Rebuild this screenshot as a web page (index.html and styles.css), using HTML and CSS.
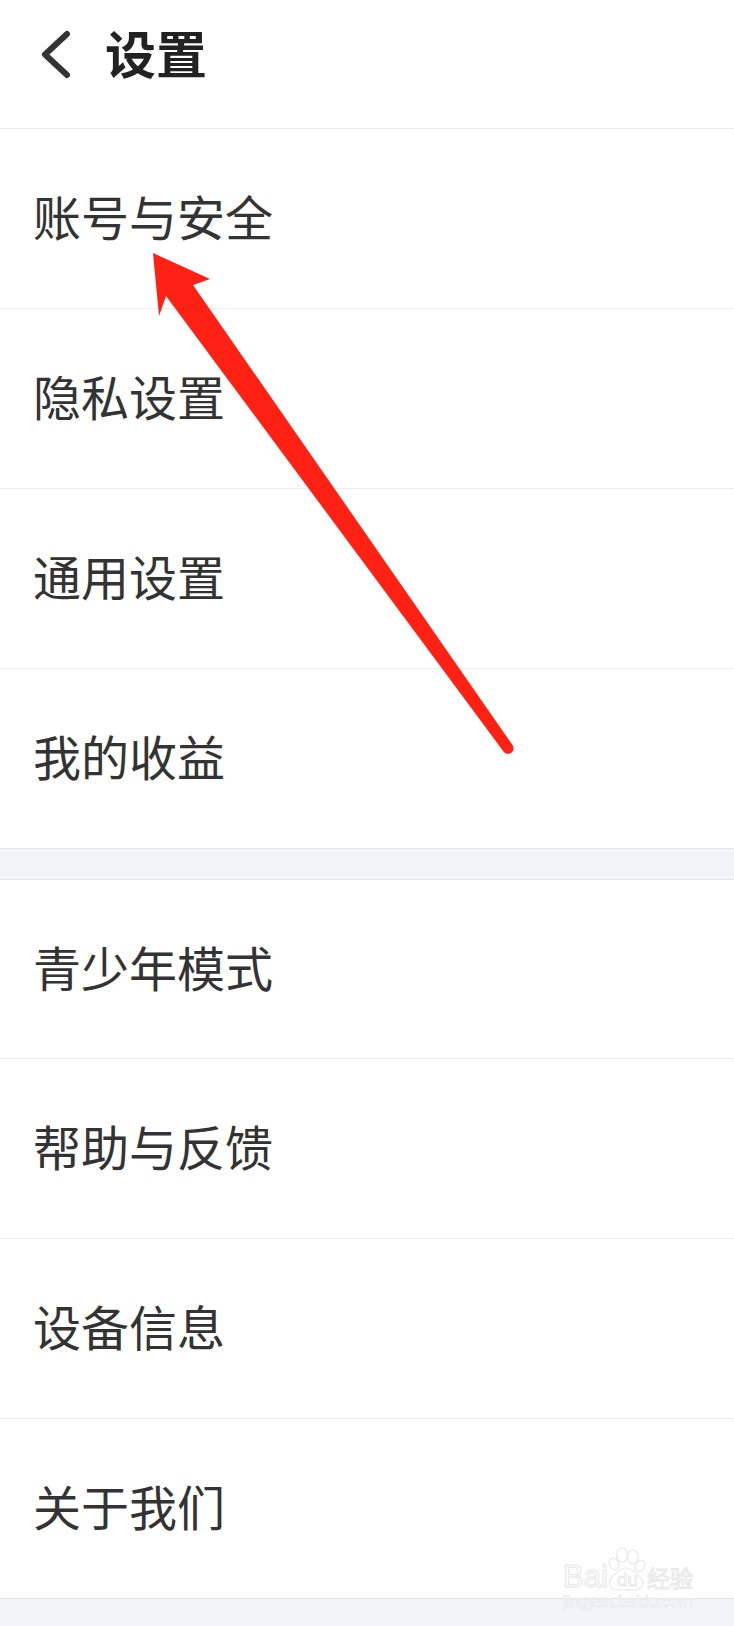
FILE: index.html
```html
<!DOCTYPE html>
<html lang="zh-CN">
<head>
    <meta charset="UTF-8">
    <meta name="viewport" content="width=device-width, initial-scale=1.0">
    <title>设置</title>
    <link rel="stylesheet" href="styles.css">
</head>
<body>
    <!-- Header -->
    <div class="header">
        <svg class="back-icon" width="32" height="50" viewBox="0 0 32 50">
            <path d="M27 4 L5 24.500 L27 45" fill="none" stroke="#333" stroke-width="6" stroke-linecap="round" stroke-linejoin="round"/>
        </svg>
        <h1>设置</h1>
    </div>

    <!-- First group -->
    <div class="group">
        <div class="row">账号与安全</div>
        <div class="row">隐私设置</div>
        <div class="row">通用设置</div>
        <div class="row">我的收益</div>
    </div>

    <div class="spacer"></div>

    <!-- Second group -->
    <div class="group group-second">
        <div class="row">青少年模式</div>
        <div class="row">帮助与反馈</div>
        <div class="row">设备信息</div>
        <div class="row">关于我们</div>
    </div>

    <div class="footer"></div>

    <!-- Red arrow drawn over the list -->
    <svg class="arrow" width="734" height="1626" viewBox="0 0 734 1626">
        <path d="M153 253 L210 279 L193 285 L512.500 745 A5.500 5.500 0 0 1 503.500 751.500 L166 296 L159 316 Z" fill="#ff2114"/>
    </svg>

    <!-- Watermark -->
    <div class="watermark">
        <svg class="paw" width="40" height="46" viewBox="0 0 40 46">
            <g fill="#fff" stroke="#e8e8e8" stroke-width="1.200">
                <ellipse cx="14" cy="8" rx="5.500" ry="7"/>
                <ellipse cx="25" cy="10" rx="5.500" ry="7"/>
                <ellipse cx="6" cy="17" rx="4.500" ry="6" transform="rotate(-30 6 17)"/>
                <ellipse cx="32" cy="19" rx="4.500" ry="6" transform="rotate(30 32 19)"/>
                <path d="M18 21 C24 21 27 26 32 30 C38 36 34 43 26 43 C20 42.500 16 42.500 10 43 C2 43 -1 36 4 30 C9 26 12 21 18 21 Z"/>
            </g>
        </svg>
        <span class="wm-bai">Bai</span>
        <span class="wm-du">du</span>
        <span class="wm-cn">经验</span>
        <span class="wm-url">jingyan.baidu.com</span>
    </div>
</body>
</html>
```

FILE: styles.css
```css
body {
    margin: 0;
    background-color: #fff;
    font-family: "Noto Sans CJK SC", "Noto Sans", sans-serif;
    color: #333;
    position: relative;
    height: 1626px;
    overflow: hidden;
}

/* Header */
.header {
    height: 110px;
    display: flex;
    align-items: center;
    padding: 0 0 18px 40px;
    border-bottom: 1px solid #e8e8e8;
}

.back-icon {
    flex-shrink: 0;
}

.header h1 {
    margin: 0 0 7px 33px;
    font-size: 51px;
    font-weight: 700;
    line-height: 60px;
    color: #222;
}

/* List rows */
.row {
    height: 179px;
    line-height: 173px;
    padding-left: 33px;
    font-size: 48px;
    border-bottom: 1px solid #ececec;
}

.group .row:last-child {
    border-bottom: 1px solid #e4e4e4;
}

.group-second .row:first-child {
    height: 178px;
}

.spacer {
    height: 30px;
    background-color: #f1f4f7;
    border-bottom: 1px solid #e4e4e4;
}

.footer {
    height: 27px;
    background-color: #f1f4f8;
}

/* Arrow overlay */
.arrow {
    position: absolute;
    top: 0;
    left: 0;
}

/* Baidu watermark */
.watermark {
    position: absolute;
    left: 563px;
    top: 1547px;
    width: 135px;
    height: 66px;
}

.paw {
    position: absolute;
    left: 45px;
    top: 0;
}

.wm-bai,
.wm-du,
.wm-cn,
.wm-url {
    position: absolute;
    white-space: nowrap;
    color: #fff;
    font-family: "Liberation Sans", sans-serif;
    -webkit-text-stroke: 1px #e6e6e6;
}

.wm-bai {
    left: 0;
    top: 12px;
    font-size: 31px;
    line-height: 36px;
}

.wm-du {
    left: 54px;
    top: 22px;
    font-size: 19px;
    line-height: 22px;
    -webkit-text-stroke: 0.8px #e6e6e6;
}

.wm-cn {
    left: 84px;
    top: 13px;
    font-family: "Noto Sans CJK SC", sans-serif;
    font-size: 23px;
    line-height: 34px;
}

.wm-url {
    left: 0;
    top: 45px;
    font-size: 16px;
    line-height: 20px;
    -webkit-text-stroke: 0.6px #e4e4e4;
}
```
